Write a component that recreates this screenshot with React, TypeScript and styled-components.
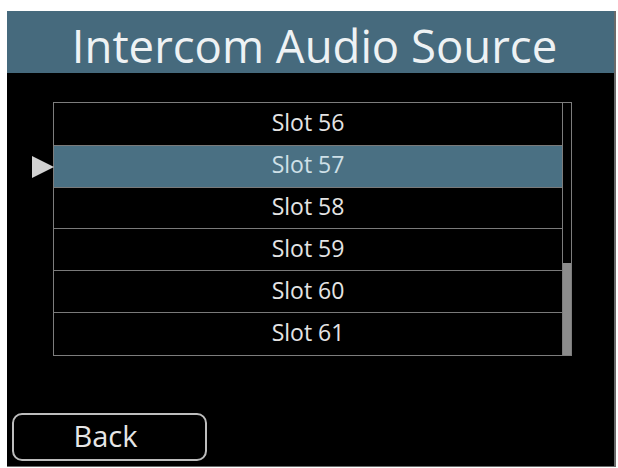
import React, { useState } from "react";
import styled, { createGlobalStyle } from "styled-components";

const GlobalStyle = createGlobalStyle`
  html, body {
    margin: 0;
    padding: 0;
    background: #ffffff;
  }
  body {
    font-family: "Open Sans", "Noto Sans", sans-serif;
  }
`;

const slots = [56, 57, 58, 59, 60, 61];

const App = () => {
  const [selected, setSelected] = useState(57);

  return (
    <>
      <GlobalStyle />
      <Page>
        <Screen>
          <Header>
            <Title>Intercom Audio Source</Title>
          </Header>
          <Body>
            <ListFrame>
              <List>
                {slots.map((slot) => (
                  <Row
                    key={slot}
                    $active={slot === selected}
                    onClick={() => setSelected(slot)}
                  >
                    {slot === selected && <Pointer />}
                    Slot {slot}
                  </Row>
                ))}
              </List>
              <ScrollTrack>
                <ScrollThumb />
              </ScrollTrack>
            </ListFrame>
          </Body>
          <Footer>
            <BackButton>Back</BackButton>
          </Footer>
        </Screen>
      </Page>
    </>
  );
};

const Page = styled.div`
  width: 618px;
  height: 468px;
  padding: 11px 0 0 7px;
  box-sizing: border-box;
`;

const Screen = styled.div`
  width: 609px;
  height: 456px;
  box-sizing: border-box;
  background: #000;
  border-right: 2px solid #6a6a6a;
  border-bottom: 1px solid #6a6a6a;
  display: flex;
  flex-direction: column;
`;

const Header = styled.div`
  height: 62px;
  background: #466a7d;
  display: flex;
  align-items: center;
  justify-content: center;
`;

const Title = styled.h1`
  margin: 0;
  font-family: "Open Sans", sans-serif;
  font-weight: 400;
  font-size: 45.5px;
  line-height: 1;
  color: #eef2f4;
  padding-left: 8px;
  margin-top: 7px;
`;

const Body = styled.div`
  flex: 1;
  padding: 29px 0 0 46px;
`;

const ListFrame = styled.div`
  width: 519px;
  height: 254px;
  box-sizing: border-box;
  border: 1px solid #7d7d7d;
  display: flex;
`;

const List = styled.div`
  flex: 1;
  display: flex;
  flex-direction: column;
`;

const Row = styled.div<{ $active: boolean }>`
  position: relative;
  height: 42px;
  box-sizing: border-box;
  border-bottom: 1px solid #7a7a7a;
  background: ${(p) => (p.$active ? "#4a7083" : "#000")};
  color: ${(p) => (p.$active ? "#cfe0e8" : "#e4e4e4")};
  display: flex;
  align-items: center;
  justify-content: center;
  font-size: 23px;
  padding-bottom: 4px;
  cursor: pointer;

  &:first-child {
    height: 43px;
  }

  &:last-child {
    border-bottom: none;
  }
`;

const Pointer = styled.span`
  position: absolute;
  left: -22px;
  top: 10px;
  width: 0;
  height: 0;
  border-top: 11px solid transparent;
  border-bottom: 11px solid transparent;
  border-left: 22px solid #d2d2d2;
`;

const ScrollTrack = styled.div`
  width: 9px;
  box-sizing: border-box;
  border-left: 1px solid #7d7d7d;
  display: flex;
  flex-direction: column;
  justify-content: flex-end;
`;

const ScrollThumb = styled.div`
  height: 92px;
  background: #8c8c8c;
`;

const Footer = styled.div`
  padding: 0 0 5px 5px;
`;

const BackButton = styled.button`
  width: 195px;
  height: 48px;
  box-sizing: border-box;
  background: #000;
  border: 2px solid #bdbdbd;
  border-radius: 10px;
  color: #e6e6e6;
  font-family: "Open Sans", sans-serif;
  font-size: 29px;
  line-height: 1;
  padding: 0 8px 4px 0;
  cursor: pointer;
`;

export default App;
